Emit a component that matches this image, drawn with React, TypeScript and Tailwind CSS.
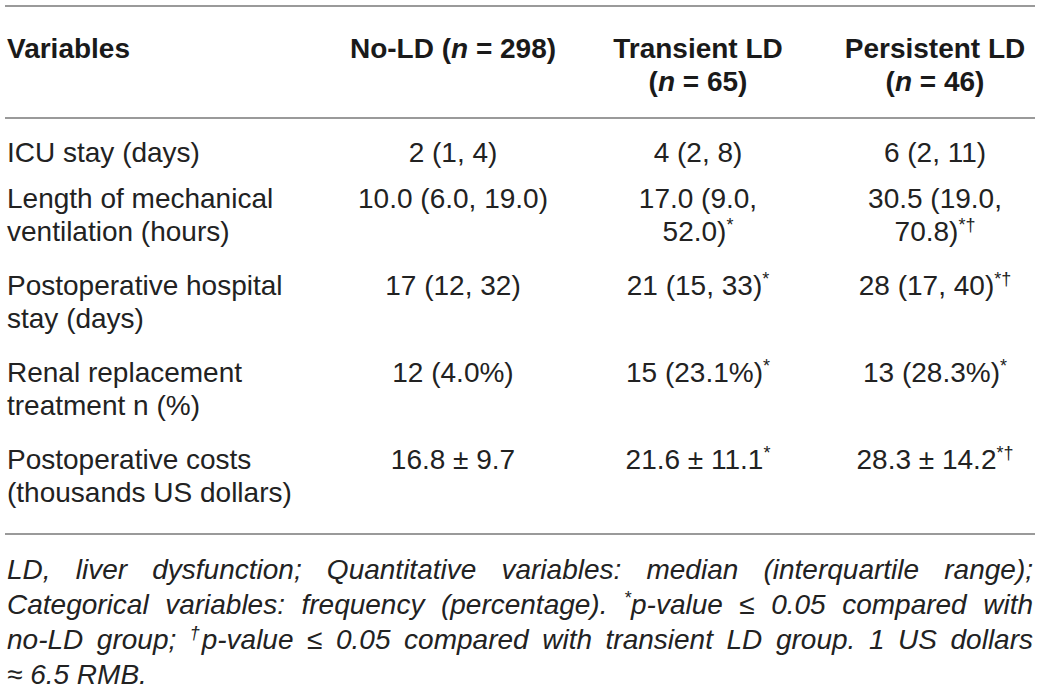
import React from "react";

const Sup = ({ children, className = "" }: { children: React.ReactNode; className?: string }) => (
  <sup className={`text-[18px] relative -top-[0.55em] align-baseline ${className}`}>{children}</sup>
);

type Row = { label: React.ReactNode; a: React.ReactNode; b: React.ReactNode; c: React.ReactNode };

const rows: Row[] = [
  { label: <>ICU stay (days)</>, a: <>2 (1, 4)</>, b: <>4 (2, 8)</>, c: <>6 (2, 11)</> },
  {
    label: (
      <>
        Length of mechanical
        <br />
        ventilation (hours)
      </>
    ),
    a: <>10.0 (6.0, 19.0)</>,
    b: (
      <>
        17.0 (9.0,
        <br />
        52.0)<Sup>*</Sup>
      </>
    ),
    c: (
      <>
        30.5 (19.0,
        <br />
        70.8)<Sup>*†</Sup>
      </>
    ),
  },
  {
    label: (
      <>
        Postoperative hospital
        <br />
        stay (days)
      </>
    ),
    a: <>17 (12, 32)</>,
    b: (
      <>
        21 (15, 33)<Sup>*</Sup>
      </>
    ),
    c: (
      <>
        28 (17, 40)<Sup>*†</Sup>
      </>
    ),
  },
  {
    label: (
      <>
        Renal replacement
        <br />
        treatment n (%)
      </>
    ),
    a: <>12 (4.0%)</>,
    b: (
      <>
        15 (23.1%)<Sup>*</Sup>
      </>
    ),
    c: (
      <>
        13 (28.3%)<Sup>*</Sup>
      </>
    ),
  },
  {
    label: (
      <>
        Postoperative costs
        <br />
        (thousands US dollars)
      </>
    ),
    a: <>16.8 ± 9.7</>,
    b: (
      <>
        21.6 ± 11.1<Sup>*</Sup>
      </>
    ),
    c: (
      <>
        28.3 ± 14.2<Sup>*†</Sup>
      </>
    ),
  },
];

export default function App() {
  return (
    <div className="w-[1040px] h-[690px] bg-white overflow-hidden font-['Liberation_Sans',Arial,sans-serif] text-[#222] text-[28px] leading-[33px]">
      <div className="pt-[5px] pl-[5px] w-[1035px]">
        <table className="table-fixed w-[1030px] border-collapse">
          <colgroup>
            <col className="w-[340px]" />
            <col className="w-[216px]" />
            <col className="w-[274px]" />
            <col className="w-[200px]" />
          </colgroup>
          <thead>
            <tr className="border-t-2 border-b-2 border-[#9a9a9a] font-bold text-[#1a1a1a]">
              <th className="text-left align-top pl-[2px] pt-[25px] pb-[19px]">Variables</th>
              <th className="text-center align-top pt-[25px] pb-[19px]">
                No-LD (<i>n</i> = 298)
              </th>
              <th className="text-center align-top pt-[25px] pb-[19px]">
                Transient LD
                <br />(<i>n</i> = 65)
              </th>
              <th className="text-center align-top pt-[25px] pb-[19px]">
                Persistent LD
                <br />(<i>n</i> = 46)
              </th>
            </tr>
          </thead>
          <tbody>
            {rows.map((r, i) => {
              const pt = i === 0 ? "pt-[17px]" : "pt-[10px]";
              const pb = i === 0 ? "pb-[3px]" : i === rows.length - 1 ? "pb-[24px]" : "pb-[11px]";
              return (
                <tr key={i} className={i === rows.length - 1 ? "border-b-2 border-[#9a9a9a]" : ""}>
                  <td className={`text-left align-top pl-[2px] ${pt} ${pb}`}>{r.label}</td>
                  <td className={`text-center align-top ${pt} ${pb}`}>{r.a}</td>
                  <td className={`text-center align-top ${pt} ${pb}`}>{r.b}</td>
                  <td className={`text-center align-top ${pt} ${pb}`}>{r.c}</td>
                </tr>
              );
            })}
          </tbody>
        </table>
        <div className="italic text-[28px] leading-[35px] pt-[17px] pl-[2px] w-[1028px] text-[#222]">
          <div className="text-justify [text-align-last:justify]">
            LD, liver dysfunction; Quantitative variables: median (interquartile range);
          </div>
          <div className="text-justify [text-align-last:justify]">
            Categorical variables: frequency (percentage). <Sup>*</Sup>p-value ≤ 0.05 compared with
          </div>
          <div className="text-justify [text-align-last:justify]">
            no-LD group; <Sup className="-mr-[4px]">†</Sup>p-value ≤ 0.05 compared with transient LD group. 1 US dollars
          </div>
          <div>≈ 6.5 RMB.</div>
        </div>
      </div>
    </div>
  );
}
